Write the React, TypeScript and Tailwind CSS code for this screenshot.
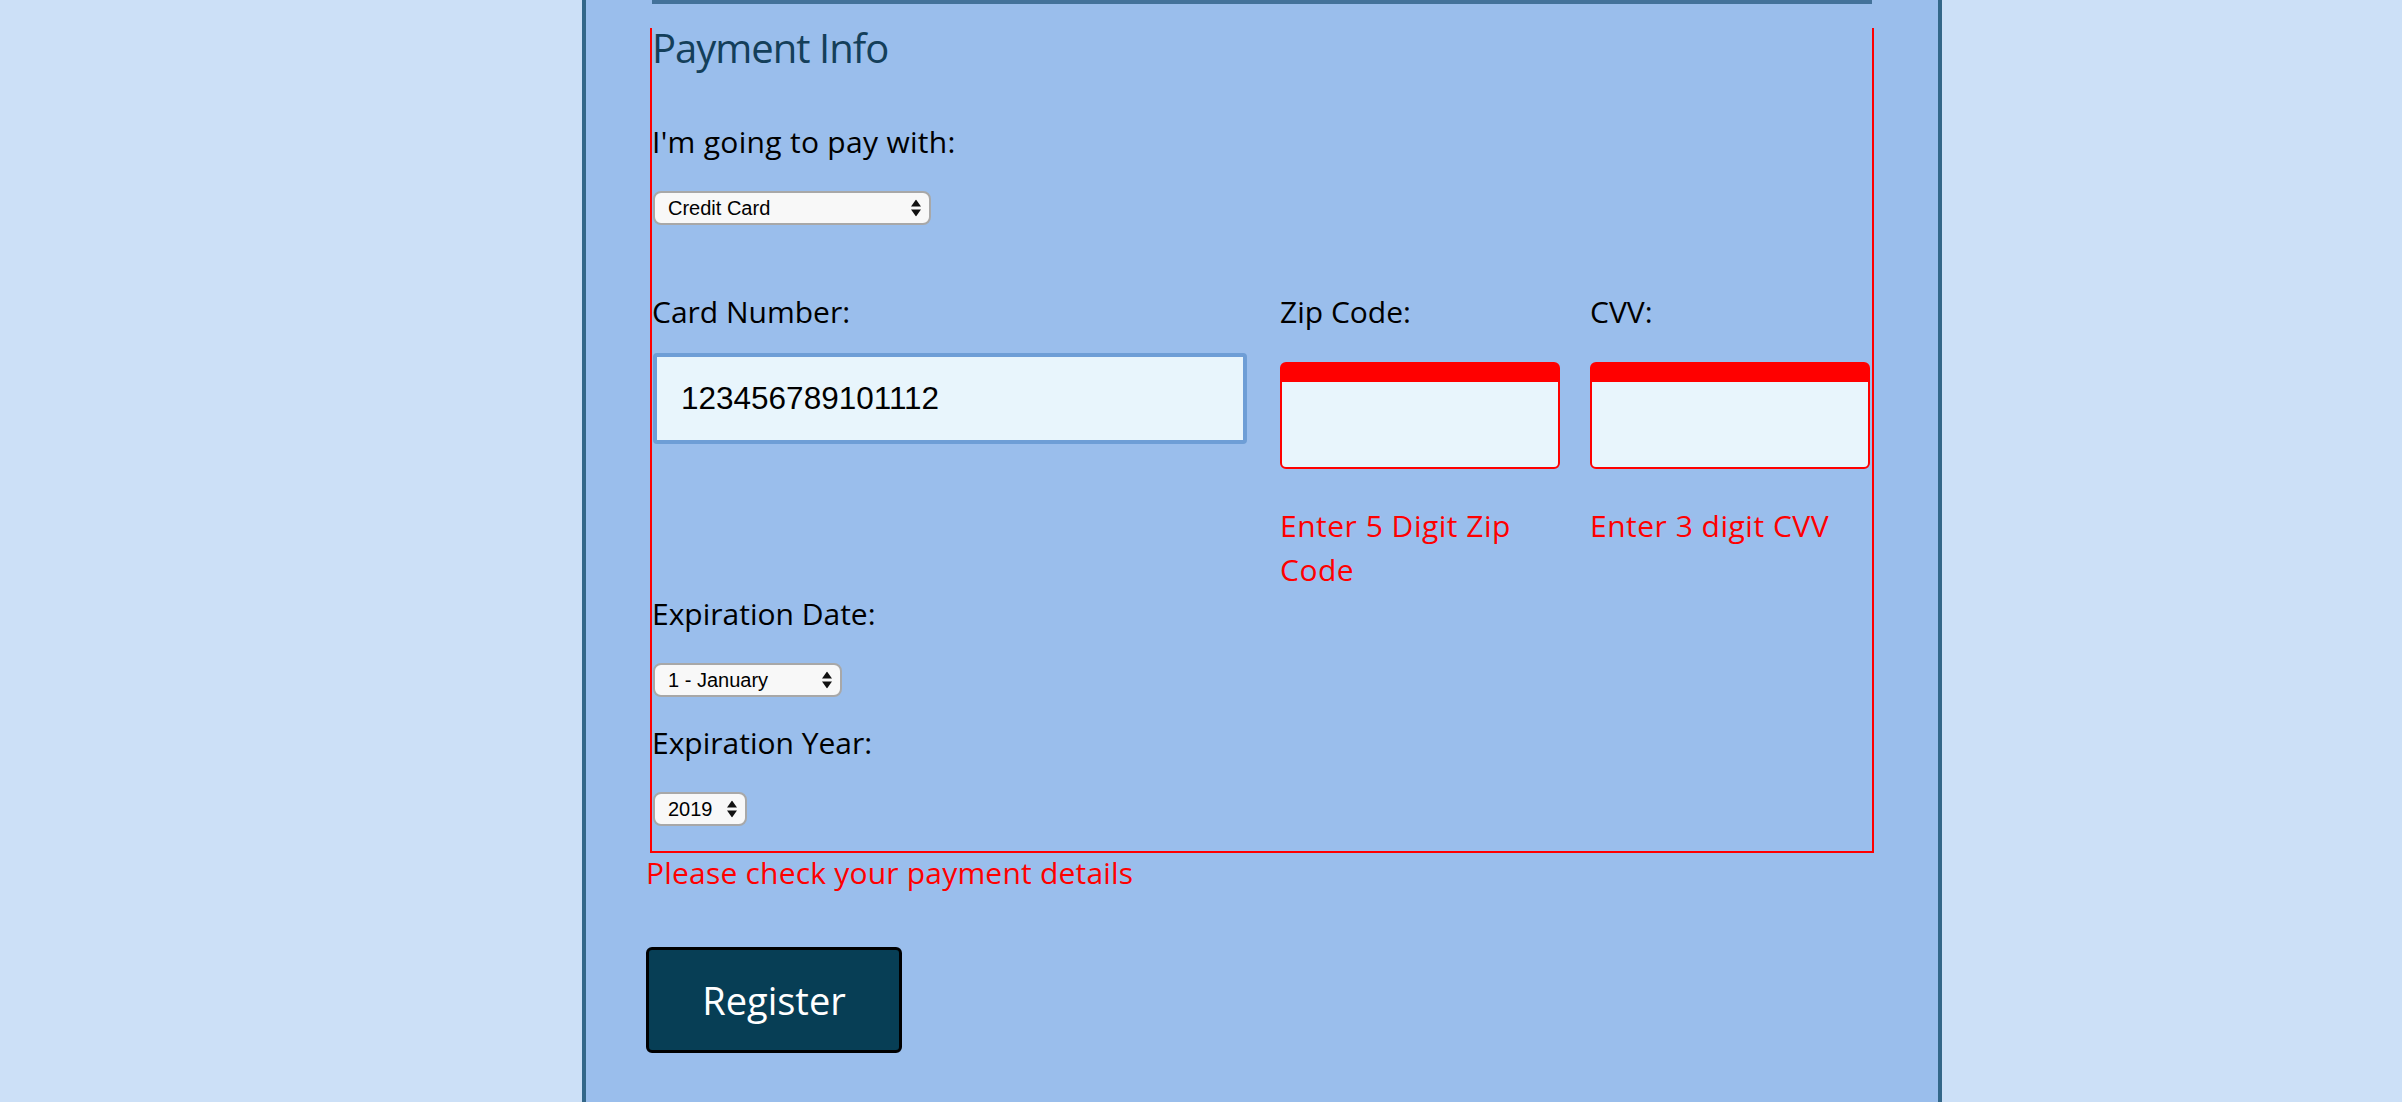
import { useState } from "react";

function SelectArrows() {
  return (
    <svg
      className="pointer-events-none absolute top-1/2 right-[10px] -translate-y-1/2"
      width="10"
      height="17"
      viewBox="0 0 10 17"
    >
      <polygon points="0,7 5,0 10,7" fill="#111" />
      <polygon points="0,10 10,10 5,17" fill="#111" />
    </svg>
  );
}

function FakeSelect({ value, options, width }: { value: string; options: string[]; width: string }) {
  const [current, setCurrent] = useState(value);
  return (
    <div className={`relative ${width}`}>
      <select
        className="h-[34px] w-full appearance-none rounded-[8px] border-2 border-[#a8a8a8] bg-[#f8f8f8] pl-[13px] pr-[26px] font-['Liberation_Sans',Arial,sans-serif] text-[20px] leading-[30px] font-normal text-black outline-none"
        value={current}
        onChange={(e) => setCurrent(e.target.value)}
      >
        {options.map((o) => (
          <option key={o}>{o}</option>
        ))}
      </select>
      <SelectArrows />
    </div>
  );
}

function ErrorField({ label, error }: { label: string; error: string }) {
  return (
    <div className="w-[280px]">
      <label className="block text-[30px] leading-[44px] text-black">{label}</label>
      <input
        className="mt-[28px] block h-[107px] w-full rounded-[6px] border-2 border-t-[20px] border-[#ff0000] bg-[#e8f5fc] px-[20px] text-[30px] outline-none"
        type="text"
      />
      <p className="mt-[35px] text-[30px] leading-[44px] tracking-[0.5px] text-[#ff0000]">{error}</p>
    </div>
  );
}

export default function App() {
  return (
    <div className="min-h-screen bg-[#cce0f7] font-['Open_Sans',sans-serif] font-medium">
      <div className="ml-[582px] min-h-[1102px] w-[1360px] border-x-4 border-[#336789] bg-[#9abeec] px-[60px]">
        <div className="mx-[6px] h-[4px] bg-[#43729a]" />

        <div className="mx-[4px] mt-[24px] border-x-2 border-b-2 border-[#ff0000] pb-[25px]">
          <h2 className="text-[40px] leading-[40px] tracking-[-1px] text-[#143f5a]">Payment Info</h2>

          <p className="mt-[52px] text-[30px] leading-[44px] tracking-[0.3px] text-black">I'm going to pay with:</p>
          <div className="mt-[27px] ml-[1px]">
            <FakeSelect value="Credit Card" options={["Credit Card", "PayPal", "Bitcoin"]} width="w-[278px]" />
          </div>

          <div className="mt-[65px] flex">
            <div className="w-[595px]">
              <label className="block text-[30px] leading-[44px] text-black">Card Number:</label>
              <input
                className="mt-[19px] ml-[1px] block h-[91px] w-[594px] rounded-[4px] border-4 border-[#6e9ed6] bg-[#e8f5fc] pl-[24px] font-['Liberation_Sans',Arial,sans-serif] text-[31.5px] font-normal text-black outline-none"
                type="text"
                defaultValue="123456789101112"
              />
            </div>
            <div className="ml-[33px]">
              <ErrorField label="Zip Code:" error="Enter 5 Digit Zip Code" />
            </div>
            <div className="ml-[30px]">
              <ErrorField label="CVV:" error="Enter 3 digit CVV" />
            </div>
          </div>

          <label className="block text-[30px] leading-[44px] text-black">Expiration Date:</label>
          <div className="mt-[27px] ml-[1px]">
            <FakeSelect
              value="1 - January"
              options={["1 - January", "2 - February", "3 - March", "4 - April"]}
              width="w-[189px]"
            />
          </div>

          <label className="mt-[24px] block text-[30px] leading-[44px] text-black">Expiration Year:</label>
          <div className="mt-[27px] ml-[1px]">
            <FakeSelect value="2019" options={["2019", "2020", "2021", "2022"]} width="w-[94px]" />
          </div>
        </div>

        <p className="-mt-[2px] text-[30px] leading-[44px] tracking-[0.2px] text-[#ff0000]">
          Please check your payment details
        </p>

        <button
          className="mt-[52px] h-[106px] w-[256px] rounded-[6px] border-[3px] border-black bg-[#073e55] text-[38px] text-white"
          type="submit"
        >
          Register
        </button>
      </div>
    </div>
  );
}
